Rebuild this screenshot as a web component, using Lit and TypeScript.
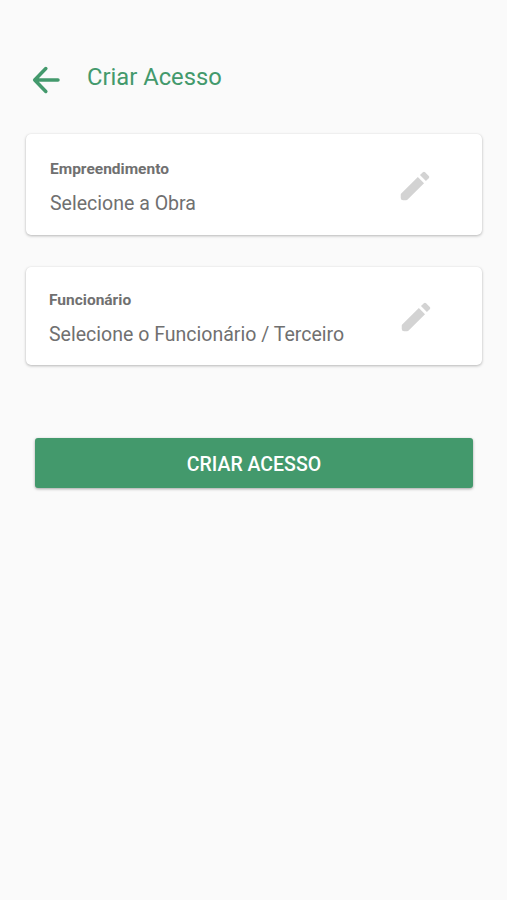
import { LitElement, html, css } from "lit";
import { customElement, property } from "lit/decorators.js";

@customElement("select-card")
class SelectCard extends LitElement {
  @property() label = "";
  @property() value = "";
  static styles = css`
    :host { display: flex; box-sizing: border-box; background: #fff; border-radius: 5px;
      box-shadow: 0 1px 3px rgba(0,0,0,.27), 0 0 1px rgba(0,0,0,.08); justify-content: space-between; }
    .label { font-size: 15.5px; line-height: 18px; font-weight: 700; color: #707070; }
    .value { font-size: 19.55px; line-height: 24px; margin-top: 14px; color: #707070; white-space: nowrap; }
    .icon { width: 38px; height: 38px; margin-top: 7px; fill: #d3d3d3; flex: none; }
  `;
  render() {
    return html`<div><div class="label">${this.label}</div><div class="value">${this.value}</div></div>
      <svg class="icon" viewBox="0 0 24 24"><path d="M3.3 16.8L13.8 6.3l3.9 3.9L7.2 20.7q-.3.3-.8.3H4.5Q3 21 3 19.5V17.6q0-.5.3-.8zM20.71 7.04a1 1 0 0 0 0-1.41l-2.34-2.34a1 1 0 0 0-1.41 0l-1.83 1.83 3.75 3.75 1.83-1.83z"/></svg>`;
  }
}

@customElement("app-root")
class AppRoot extends LitElement {
  static styles = css`
    :host { display: block; box-sizing: border-box; height: 900px; background: #fafafa; font-family: Roboto, sans-serif; padding: 60px 25px 0 26px; }
    header { display: flex; align-items: center; height: 38px; color: #43996c; }
    .back { width: 40px; height: 40px; margin-top: 1px; fill: none; stroke: #43996c; stroke-width: 2.1; stroke-linecap: round; stroke-linejoin: round; }
    h1 { margin: 0 0 4px 21px; font-size: 23.75px; line-height: 30px; font-weight: 400; }
    .first { height: 101px; margin-top: 36px; padding: 26px 48px 0 24px; }
    .second { height: 98px; margin-top: 32px; padding: 24px 47px 0 23px; }
    button { display: block; width: 438px; height: 50px; margin: 73px 0 0 9px; padding: 2px 0 0; border: 0; border-radius: 3px; background: #43996c; color: #fff; font: 500 19.5px Roboto, sans-serif; box-shadow: 0 1px 3px rgba(0,0,0,.35); }
  `;
  render() {
    return html`<header><svg class="back" viewBox="0 0 24 24"><path d="M19.2 12H5.2M11.9 5.1L5.2 12l6.7 6.9"/></svg><h1>Criar Acesso</h1></header>
      <select-card class="first" label="Empreendimento" value="Selecione a Obra"></select-card>
      <select-card class="second" label="Funcionário" value="Selecione o Funcionário / Terceiro"></select-card>
      <button>CRIAR ACESSO</button>`;
  }
}
